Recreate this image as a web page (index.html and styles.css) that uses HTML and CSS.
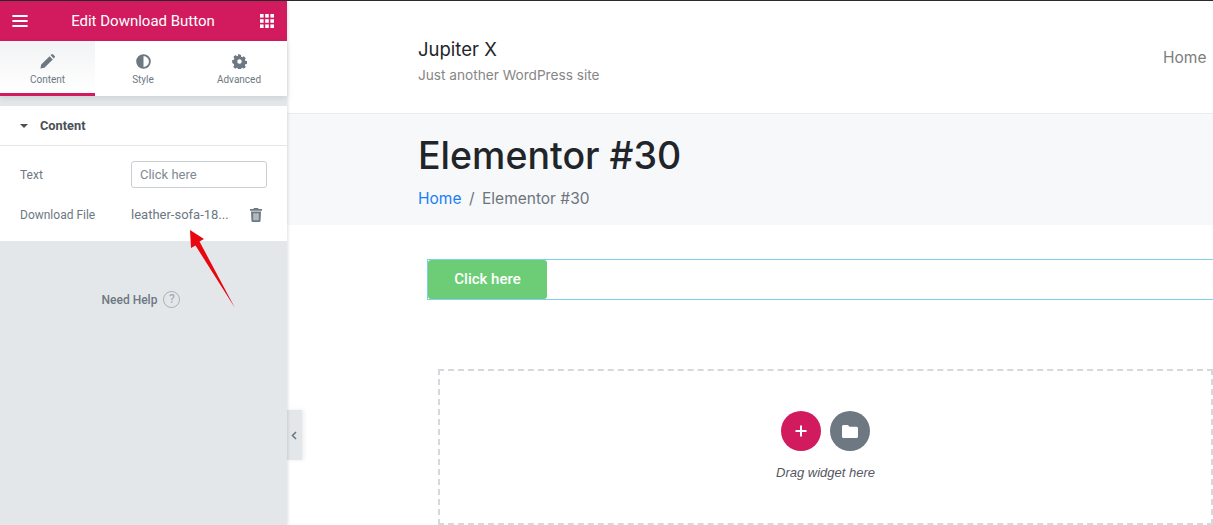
FILE: index.html
```html
<!DOCTYPE html>
<html lang="en">
<head>
    <meta charset="UTF-8">
    <meta name="viewport" content="width=device-width, initial-scale=1.0">
    <title>Edit Download Button</title>
    <link rel="stylesheet" href="styles.css">
</head>
<body>
    <div class="editor">
        <!-- Left panel -->
        <aside class="panel">
            <div class="panel-head">
                <svg class="head-icon" width="16" height="12" viewBox="0 0 18 14"><path d="M1 0h16a1 1 0 0 1 0 2.4H1A1 1 0 0 1 1 0zm0 5.8h16a1 1 0 0 1 0 2.4H1a1 1 0 0 1 0-2.4zm0 5.8h16a1 1 0 0 1 0 2.4H1a1 1 0 0 1 0-2.4z" fill="#fff"/></svg>
                <span class="panel-title">Edit Download Button</span>
                <svg class="head-icon" width="14" height="14" viewBox="0 0 14 14" fill="#fff"><rect width="3.6" height="3.6"/><rect x="5.2" width="3.6" height="3.6"/><rect x="10.4" width="3.6" height="3.6"/><rect y="5.2" width="3.6" height="3.6"/><rect x="5.2" y="5.2" width="3.6" height="3.6"/><rect x="10.4" y="5.2" width="3.6" height="3.6"/><rect y="10.4" width="3.6" height="3.6"/><rect x="5.2" y="10.4" width="3.6" height="3.6"/><rect x="10.4" y="10.4" width="3.6" height="3.6"/></svg>
            </div>

            <div class="tabs">
                <div class="tab active">
                    <svg width="15" height="15" viewBox="0 0 15 15" fill="#6d7882"><path d="M0.4 14.6l0.8-4L9.6 2.2l3.2 3.2-8.4 8.4zM10.6 1.2l0.8-0.8a1.2 1.2 0 0 1 1.7 0l1.5 1.5a1.2 1.2 0 0 1 0 1.7l-0.8 0.8z"/></svg>
                    <span>Content</span>
                </div>
                <div class="tab">
                    <svg width="15" height="15" viewBox="0 0 16 16"><circle cx="8" cy="8" r="6.8" fill="none" stroke="#6d7882" stroke-width="2"/><path d="M8 1.500a6.500 6.500 0 0 0 0 13z" fill="#6d7882"/></svg>
                    <span>Style</span>
                </div>
                <div class="tab">
                    <svg width="15" height="15" viewBox="0 0 24 24" fill="#6d7882"><path fill-rule="evenodd" d="M14.6 0.5l0.5 3.2 1.9 0.8 2.7-1.9 3.6 3.6-1.9 2.7 0.8 1.9 3.2 0.5v0 5.1l-3.2 0.5-0.8 1.9 1.9 2.7-3.6 3.6-2.7-1.9-1.9 0.8-0.5 3.2H9.5l-0.5-3.2-1.9-0.8-2.7 1.9-3.6-3.6 1.9-2.7-0.8-1.9L-1 14.4V9.3l3.2-0.5 0.8-1.9-1.9-2.7 3.6-3.6 2.7 1.9 1.9-0.8 0.5-3.2zM12 8a4 4 0 1 0 0 8 4 4 0 0 0 0-8z" transform="translate(1.2 1.2) scale(0.9)"/></svg>
                    <span>Advanced</span>
                </div>
            </div>

            <div class="section">
                <div class="section-head">
                    <i class="caret"></i>
                    <span>Content</span>
                </div>
                <div class="field">
                    <label>Text</label>
                    <div class="text-input">Click here</div>
                </div>
                <div class="field file-field">
                    <label>Download File</label>
                    <span class="file-name">leather-sofa-18...</span>
                    <svg width="12" height="14" viewBox="0 0 12 14" fill="#6d7882"><path d="M4 0h4l0.6 1H12v1.8H0V1h3.4z"/><path fill-rule="evenodd" d="M1 3.400h10l-0.5 9.500a1.200 1.200 0 0 1-1.200 1.100H2.700a1.200 1.200 0 0 1-1.200-1.100zM3.600 5.200v7h0.9v-7zm1.950 0v7h0.900v-7zm1.950 0v7h0.900v-7z"/></svg>
                </div>
            </div>

            <div class="need-help">
                <span>Need Help</span>
                <i class="help-mark">?</i>
            </div>
        </aside>

        <!-- Page preview -->
        <main class="preview">
            <header class="site-head">
                <div class="brand">
                    <div class="site-name">Jupiter X</div>
                    <div class="site-desc">Just another WordPress site</div>
                </div>
                <a class="nav-link">Home</a>
            </header>

            <div class="title-bar">
                <h1>Elementor #30</h1>
                <div class="crumbs">
                    <a>Home</a>
                    <span class="crumb-sep">/</span>
                    <span>Elementor #30</span>
                </div>
            </div>

            <div class="widget-row">
                <div class="widget-box">
                    <button class="green-btn">Click here</button>
                </div>
            </div>

            <div class="drop-zone">
                <div class="drop-buttons">
                    <span class="round-btn pink">
                        <svg width="12" height="12" viewBox="0 0 12 12"><path d="M5 0.5h2v4.5h4.5v2H7v4.5H5V7H0.5V5H5z" fill="#fff"/></svg>
                    </span>
                    <span class="round-btn grey">
                        <svg width="16" height="13" viewBox="0 0 16 13"><path d="M1.5 0h4.4l1.6 1.7h7a1.5 1.5 0 0 1 1.5 1.5v8.3a1.5 1.5 0 0 1-1.5 1.5h-13A1.5 1.5 0 0 1 0 11.5v-10A1.5 1.5 0 0 1 1.5 0z" fill="#fff"/></svg>
                    </span>
                </div>
                <p class="drop-text">Drag widget here</p>
            </div>
        </main>

        <!-- Collapse handle -->
        <div class="collapse-tab">
            <svg width="6" height="9" viewBox="0 0 6 9"><path d="M5 1L1.5 4.5 5 8" fill="none" stroke="#6d7882" stroke-width="1.6"/></svg>
        </div>

        <!-- Red annotation arrow -->
        <svg class="arrow" width="60" height="86" viewBox="0 0 60 86"><path d="M1 0L15 9L10.500 11.500L46 78L6.500 15.500L2 18z" fill="#e8060f"/></svg>
    </div>
</body>
</html>
```

FILE: styles.css
```css
* {
    margin: 0;
    padding: 0;
    box-sizing: border-box;
}
html, body {
    height: 525px;
    overflow: hidden;
    background: #fff;
}
.editor {
    position: relative;
    display: flex;
    height: 525px;
    border-top: 1px solid #2b2b2b;
    font-family: Roboto, sans-serif;
}

/* panel */
.panel {
    display: flex;
    flex-direction: column;
    flex: 0 0 287px;
    background: #e4e7ea;
    box-shadow: 1px 0 3px rgba(0, 0, 0, 0.12);
    z-index: 2;
}
.panel-head {
    display: flex;
    justify-content: space-between;
    align-items: center;
    height: 40px;
    padding: 0 13px 0 12px;
    background: #d11b5e;
    color: #fff;
}
.panel-title {
    margin-right: 2px;
    font-size: 15px;
    font-weight: 400;
}
.tabs {
    display: flex;
    height: 55px;
    background: #fff;
    box-shadow: 0 2px 6px rgba(0, 0, 0, 0.1);
}
.tab {
    flex: 1;
    display: flex;
    flex-direction: column;
    align-items: center;
    padding-top: 13px;
    gap: 5px;
    font-size: 10px;
    color: #6d7882;
}
.tab.active {
    flex: 0 0 95px;
    background: linear-gradient(#f2f3f4, #fff);
    border-bottom: 3px solid #d11b5e;
}
.section {
    margin-top: 10px;
    background: #fff;
    padding-bottom: 13px;
}
.section-head {
    display: flex;
    align-items: center;
    height: 40px;
    padding-left: 20px;
    border-bottom: 1px solid #e4e7ea;
    font-size: 12.800px;
    font-weight: 700;
    color: #495157;
}
.caret {
    width: 0;
    height: 0;
    margin-right: 12px;
    border-left: 4px solid transparent;
    border-right: 4px solid transparent;
    border-top: 4px solid #495157;
}
.field {
    display: flex;
    align-items: center;
    padding: 0 20px;
    margin-top: 15px;
    height: 27px;
    font-size: 12px;
    color: #6d7882;
}
.field label {
    flex: 0 0 111px;
}
.text-input {
    flex: 1;
    height: 27px;
    line-height: 25px;
    padding-left: 8px;
    border: 1px solid #c9ced3;
    border-radius: 3px;
    font-size: 13px;
    color: #7f8992;
}
.file-field {
    margin-top: 13px;
    justify-content: flex-start;
}
.file-name {
    flex: 1;
    font-size: 13px;
}
.file-field svg {
    margin-right: 5px;
}
.need-help {
    display: flex;
    align-items: center;
    justify-content: center;
    gap: 6px;
    margin-top: 50px;
    padding-right: 5px;
    font-size: 12px;
    font-weight: 500;
    color: #6d7882;
}
.help-mark {
    width: 17px;
    height: 17px;
    line-height: 14px;
    text-align: center;
    border: 1.500px solid #a4afb7;
    border-radius: 50%;
    font-style: normal;
    font-size: 12px;
    color: #a4afb7;
}

/* preview */
.preview {
    flex: 1;
    min-width: 0;
    overflow: hidden;
    font-family: Inter, sans-serif;
}
.site-head {
    display: flex;
    justify-content: space-between;
    height: 113px;
    padding: 37px 0 0 131px;
    border-bottom: 1px solid #e9ebee;
}
.site-name {
    font-size: 18.500px;
    line-height: 23px;
    color: #212529;
}
.site-desc {
    margin-top: 6px;
    font-size: 13.650px;
    line-height: 16px;
    color: #868686;
}
.nav-link {
    margin: 11px 0 0;
    width: 50px;
    font-size: 15.500px;
    line-height: 18px;
    color: #7d7d7d;
}
.title-bar {
    height: 111px;
    padding: 19px 0 0 131px;
    background: #f7f8fa;
}
.title-bar h1 {
    font-size: 37.500px;
    line-height: 46px;
    font-weight: 500;
    color: #212529;
}
.crumbs {
    display: flex;
    margin-top: 10px;
    font-size: 15.500px;
    line-height: 20px;
    color: #6c757d;
}
.crumbs a {
    color: #1a7ff5;
}
.crumb-sep {
    margin: 0 7.500px;
}
.widget-row {
    padding: 34px 0 0 140px;
}
.widget-box {
    height: 41px;
    border: 1px solid #7fd0ec;
    border-right: none;
}
.green-btn {
    display: block;
    width: 119px;
    height: 39px;
    padding-bottom: 2px;
    border: none;
    border-radius: 3px;
    background: #6ccd76;
    color: #fff;
    font-family: Roboto, sans-serif;
    font-size: 15px;
    font-weight: 500;
}
.drop-zone {
    height: 156px;
    margin: 69px 0 0 151px;
    padding-top: 40px;
    border: 2px dashed #d5d8dc;
    text-align: center;
}
.drop-buttons {
    display: flex;
    justify-content: center;
    gap: 9px;
}
.round-btn {
    display: flex;
    align-items: center;
    justify-content: center;
    width: 40px;
    height: 40px;
    border-radius: 50%;
}
.pink {
    background: #d11b5e;
}
.grey {
    background: #6d7882;
}
.drop-text {
    margin-top: 14px;
    font-family: "Liberation Sans", Arial, sans-serif;
    font-style: italic;
    font-size: 13px;
    line-height: 16px;
    color: #54595f;
}

/* overlays */
.collapse-tab {
    position: absolute;
    left: 287px;
    top: 409px;
    display: flex;
    align-items: center;
    justify-content: center;
    width: 15px;
    height: 50px;
    padding-right: 2px;
    background: #e4e7ea;
    box-shadow: 2px 0 4px rgba(0, 0, 0, 0.08);
    z-index: 1;
}
.arrow {
    position: absolute;
    left: 189px;
    top: 229px;
    z-index: 3;
}
```
